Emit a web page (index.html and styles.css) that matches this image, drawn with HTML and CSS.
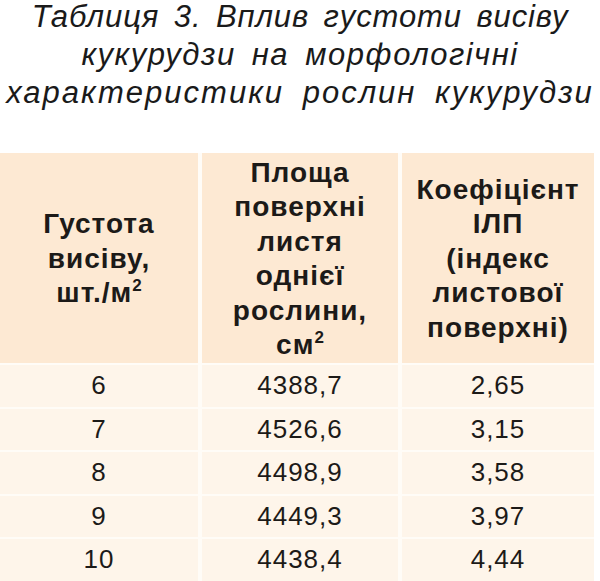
FILE: index.html
```
<!DOCTYPE html>
<html lang="uk">
<head>
<meta charset="utf-8">
<link rel="stylesheet" href="styles.css">
</head>
<body>
<h1 class="title"><span class="l1">Таблиця 3. Вплив густоти висіву</span><br><span class="l2">кукурудзи на морфологічні</span><br><span class="l3">характеристики рослин кукурудзи</span></h1>
<div class="table">
  <div class="th"><div>Густота<br>висіву,<br>шт./м<sup>2</sup></div></div>
  <div class="th"><div>Площа<br>поверхні<br>листя<br>однієї<br>рослини,<br>см<sup>2</sup></div></div>
  <div class="th"><div>Коефіцієнт<br>ІЛП<br>(індекс<br>листової<br>поверхні)</div></div>
  <div class="td">6</div><div class="td">4388,7</div><div class="td">2,65</div>
  <div class="td">7</div><div class="td">4526,6</div><div class="td">3,15</div>
  <div class="td">8</div><div class="td">4498,9</div><div class="td">3,58</div>
  <div class="td">9</div><div class="td">4449,3</div><div class="td">3,97</div>
  <div class="td">10</div><div class="td">4438,4</div><div class="td">4,44</div>
</div>
</body>
</html>
```
FILE: styles.css
```
html, body {
  margin: 0;
  padding: 0;
  background: #ffffff;
}
body {
  width: 600px;
  height: 581px;
  overflow: hidden;
  font-family: "Liberation Sans", Arial, sans-serif;
  color: #1c1a18;
}
.title {
  margin: -2px 0 0 0;
  font-size: 31px;
  line-height: 38px;
  font-weight: normal;
  font-style: italic;
  text-align: center;
  letter-spacing: 1.5px;
  word-spacing: 6px;
  color: #1a1a1a;
}
.title .l1 {
  letter-spacing: 0.9px;
  word-spacing: 5px;
}
.title .l3 {
  letter-spacing: 2px;
  word-spacing: 8px;
}
.table {
  margin-top: 41px;
  display: grid;
  grid-template-columns: 198px 196px 192px;
  column-gap: 4px;
  row-gap: 2px;
  background: #fffcf7;
  width: 594px;
}
.th {
  background: #fde9d3;
  height: 210px;
  display: flex;
  align-items: center;
  justify-content: center;
  text-align: center;
  font-weight: bold;
  font-size: 28px;
  line-height: 34.5px;
  letter-spacing: 1px;
  padding-top: 2px;
  box-sizing: border-box;
}
.th sup {
  font-size: 17px;
  line-height: 0;
  letter-spacing: 0;
  vertical-align: 11px;
}
.td {
  background: #fef5ea;
  height: 41.5px;
  display: flex;
  align-items: center;
  justify-content: center;
  font-size: 26px;
  letter-spacing: 1px;
}
```
